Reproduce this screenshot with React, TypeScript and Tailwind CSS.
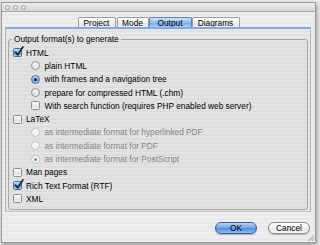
import React from "react";

function Check({ checked = false }: { checked?: boolean }) {
  return (
    <span
      className={
        "relative block w-[9px] h-[9px] shrink-0 rounded-[1.5px] border " +
        (checked
          ? "border-[#4a6f9e] bg-[linear-gradient(#c7def8,#7fb0ea_50%,#5b97e2_51%,#a6cdf5)]"
          : "border-[#8d8d8d] bg-[linear-gradient(#fafafa,#e9e9e9_50%,#dedede_51%,#f4f4f4)]")
      }
    >
      {checked && (
        <svg
          className="absolute left-[0px] top-[-3px]"
          width="10"
          height="11"
          viewBox="0 0 10 11"
        >
          <path
            d="M1.5 6.2 L3.8 8.8 L8.8 1"
            fill="none"
            stroke="#1c2a3c"
            strokeWidth="1.8"
            strokeLinecap="round"
            strokeLinejoin="round"
          />
        </svg>
      )}
    </span>
  );
}

function Radio({
  checked = false,
  disabled = false,
}: {
  checked?: boolean;
  disabled?: boolean;
}) {
  let cls = "border-[#8d8d8d] bg-[linear-gradient(#fafafa,#e9e9e9_50%,#dedede_51%,#f4f4f4)]";
  if (checked && !disabled)
    cls = "border-[#4a6f9e] bg-[linear-gradient(#c7def8,#7fb0ea_50%,#5b97e2_51%,#a6cdf5)]";
  if (disabled) cls = "border-[#c4c4c4] bg-[linear-gradient(#fbfbfb,#f0f0f0)]";
  return (
    <span
      className={
        "flex items-center justify-center w-[9px] h-[9px] shrink-0 rounded-full border " + cls
      }
    >
      {checked && (
        <span
          className={
            "block w-[3px] h-[3px] rounded-full " +
            (disabled ? "bg-[#8a8a8a]" : "bg-[#14202e]")
          }
        />
      )}
    </span>
  );
}

function Row({
  children,
  indent = false,
  disabled = false,
}: {
  children: React.ReactNode;
  indent?: boolean;
  disabled?: boolean;
}) {
  return (
    <div
      className={
        "flex items-center h-[13.3px] " +
        (indent ? "pl-[21px] gap-[4.5px] " : "pl-[3px] gap-[4px] ") +
        (disabled ? "text-[#868686]" : "text-black")
      }
    >
      {children}
    </div>
  );
}

export default function App() {
  const stripe =
    "[background:repeating-linear-gradient(180deg,#eeeeee_0px,#eeeeee_2px,#e8e8e8_2px,#e8e8e8_4px)]";
  return (
    <div className="w-[320px] h-[245px] overflow-hidden bg-[#e9e9e9] pt-[2px] pl-[1px] [font-family:'Liberation_Sans',Arial,sans-serif] text-[8.3px] leading-[10px]">
      <div className="w-[315px] h-[241px] flex flex-col border border-[#9a9a9a] shadow-[1px_2px_4px_rgba(0,0,0,0.35)] bg-[#ececec]">
        {/* title bar */}
        <div className="h-[9px] shrink-0 flex items-center gap-[3px] pl-[3px] bg-[linear-gradient(#ececec,#d6d6d6)] border-b border-[#a8a8a8]">
          <span className="block w-[5px] h-[5px] rounded-full border border-[#9c9c9c] bg-[#e6e6e6]" />
          <span className="block w-[5px] h-[5px] rounded-full border border-[#9c9c9c] bg-[#e6e6e6]" />
          <span className="block w-[5px] h-[5px] rounded-full border border-[#9c9c9c] bg-[#e6e6e6]" />
        </div>

        <div className={"flex-1 flex flex-col " + stripe}>
          {/* tabs */}
          <div className="flex justify-center pt-[5px] h-[15px] shrink-0">
            <div className="flex items-end">
              <div className="w-[38px] h-[10px] flex items-center justify-center rounded-t-[2px] border border-b-0 border-[#9c9c9c] bg-[linear-gradient(#ffffff,#f2f2f2_50%,#e4e4e4_51%,#f0f0f0)] mr-[1px]">
                Project
              </div>
              <div className="w-[32px] h-[10px] flex items-center justify-center rounded-t-[2px] border border-b-0 border-[#9c9c9c] bg-[linear-gradient(#ffffff,#f2f2f2_50%,#e4e4e4_51%,#f0f0f0)]">
                Mode
              </div>
              <div className="w-[43px] h-[10px] flex items-center justify-center rounded-t-[2px] border border-b-0 border-[#5784bf] bg-[linear-gradient(#cfe3fa,#8dbcf0_50%,#6aa5ea_51%,#a9d0f7)]">
                Output
              </div>
              <div className="w-[48px] h-[10px] flex items-center justify-center rounded-t-[2px] border border-b-0 border-[#9c9c9c] bg-[linear-gradient(#ffffff,#f2f2f2_50%,#e4e4e4_51%,#f0f0f0)]">
                Diagrams
              </div>
            </div>
          </div>

          {/* tab panel */}
          <div className="ml-[3px] w-[306px] h-[185px] shrink-0 border-t-2 border-t-[#7eaae6] border-x border-b border-x-[#b4b4b4] border-b-[#c4c4c4] bg-black/[0.025] px-[2px] pt-[5px] pb-[1px] flex flex-col">
            <fieldset className="flex-1 border border-[#a6a6a6] rounded-[3px] bg-black/[0.02] pt-[2px] pb-[3px] pl-[1px]">
              <legend className="ml-[2px] px-[2px] leading-[10px] text-black">
                Output format(s) to generate
              </legend>
              <Row>
                <Check checked />
                <span>HTML</span>
              </Row>
              <Row indent>
                <Radio />
                <span>plain HTML</span>
              </Row>
              <Row indent>
                <Radio checked />
                <span>with frames and a navigation tree</span>
              </Row>
              <Row indent>
                <Radio />
                <span>prepare for compressed HTML (.chm)</span>
              </Row>
              <Row indent>
                <Check />
                <span>With search function (requires PHP enabled web server)</span>
              </Row>
              <Row>
                <Check />
                <span>LaTeX</span>
              </Row>
              <Row indent disabled>
                <Radio disabled />
                <span>as intermediate format for hyperlinked PDF</span>
              </Row>
              <Row indent disabled>
                <Radio disabled />
                <span>as intermediate format for PDF</span>
              </Row>
              <Row indent disabled>
                <Radio disabled checked />
                <span>as intermediate format for PostScript</span>
              </Row>
              <Row>
                <Check />
                <span>Man pages</span>
              </Row>
              <Row>
                <Check checked />
                <span>Rich Text Format (RTF)</span>
              </Row>
              <Row>
                <Check />
                <span>XML</span>
              </Row>
            </fieldset>
          </div>

          {/* buttons */}
          <div className="flex justify-end gap-[11px] pr-[5px] mt-[10px]">
            <div className="w-[42px] h-[12px] flex items-center justify-center rounded-full border border-[#3b5f8f] bg-[linear-gradient(#b5d3f6,#6ea4e6_50%,#4c8ade_51%,#8fc0f2)] text-black shadow-[0_1px_1px_rgba(0,0,0,0.25)]">
              OK
            </div>
            <div className="w-[42px] h-[12px] flex items-center justify-center rounded-full border border-[#8a8a8a] bg-[linear-gradient(#ffffff,#f4f4f4_50%,#e6e6e6_51%,#f7f7f7)] text-black shadow-[0_1px_1px_rgba(0,0,0,0.2)]">
              Cancel
            </div>
          </div>

          {/* resize grip */}
          <div className="flex-1 flex items-end justify-end pr-[1px] pb-[1px]">
            <svg width="6" height="6" viewBox="0 0 6 6">
              <path d="M0 6 L6 0 M2 6 L6 2 M4 6 L6 4" stroke="#9a9a9a" strokeWidth="0.8" />
            </svg>
          </div>
        </div>
      </div>
    </div>
  );
}
